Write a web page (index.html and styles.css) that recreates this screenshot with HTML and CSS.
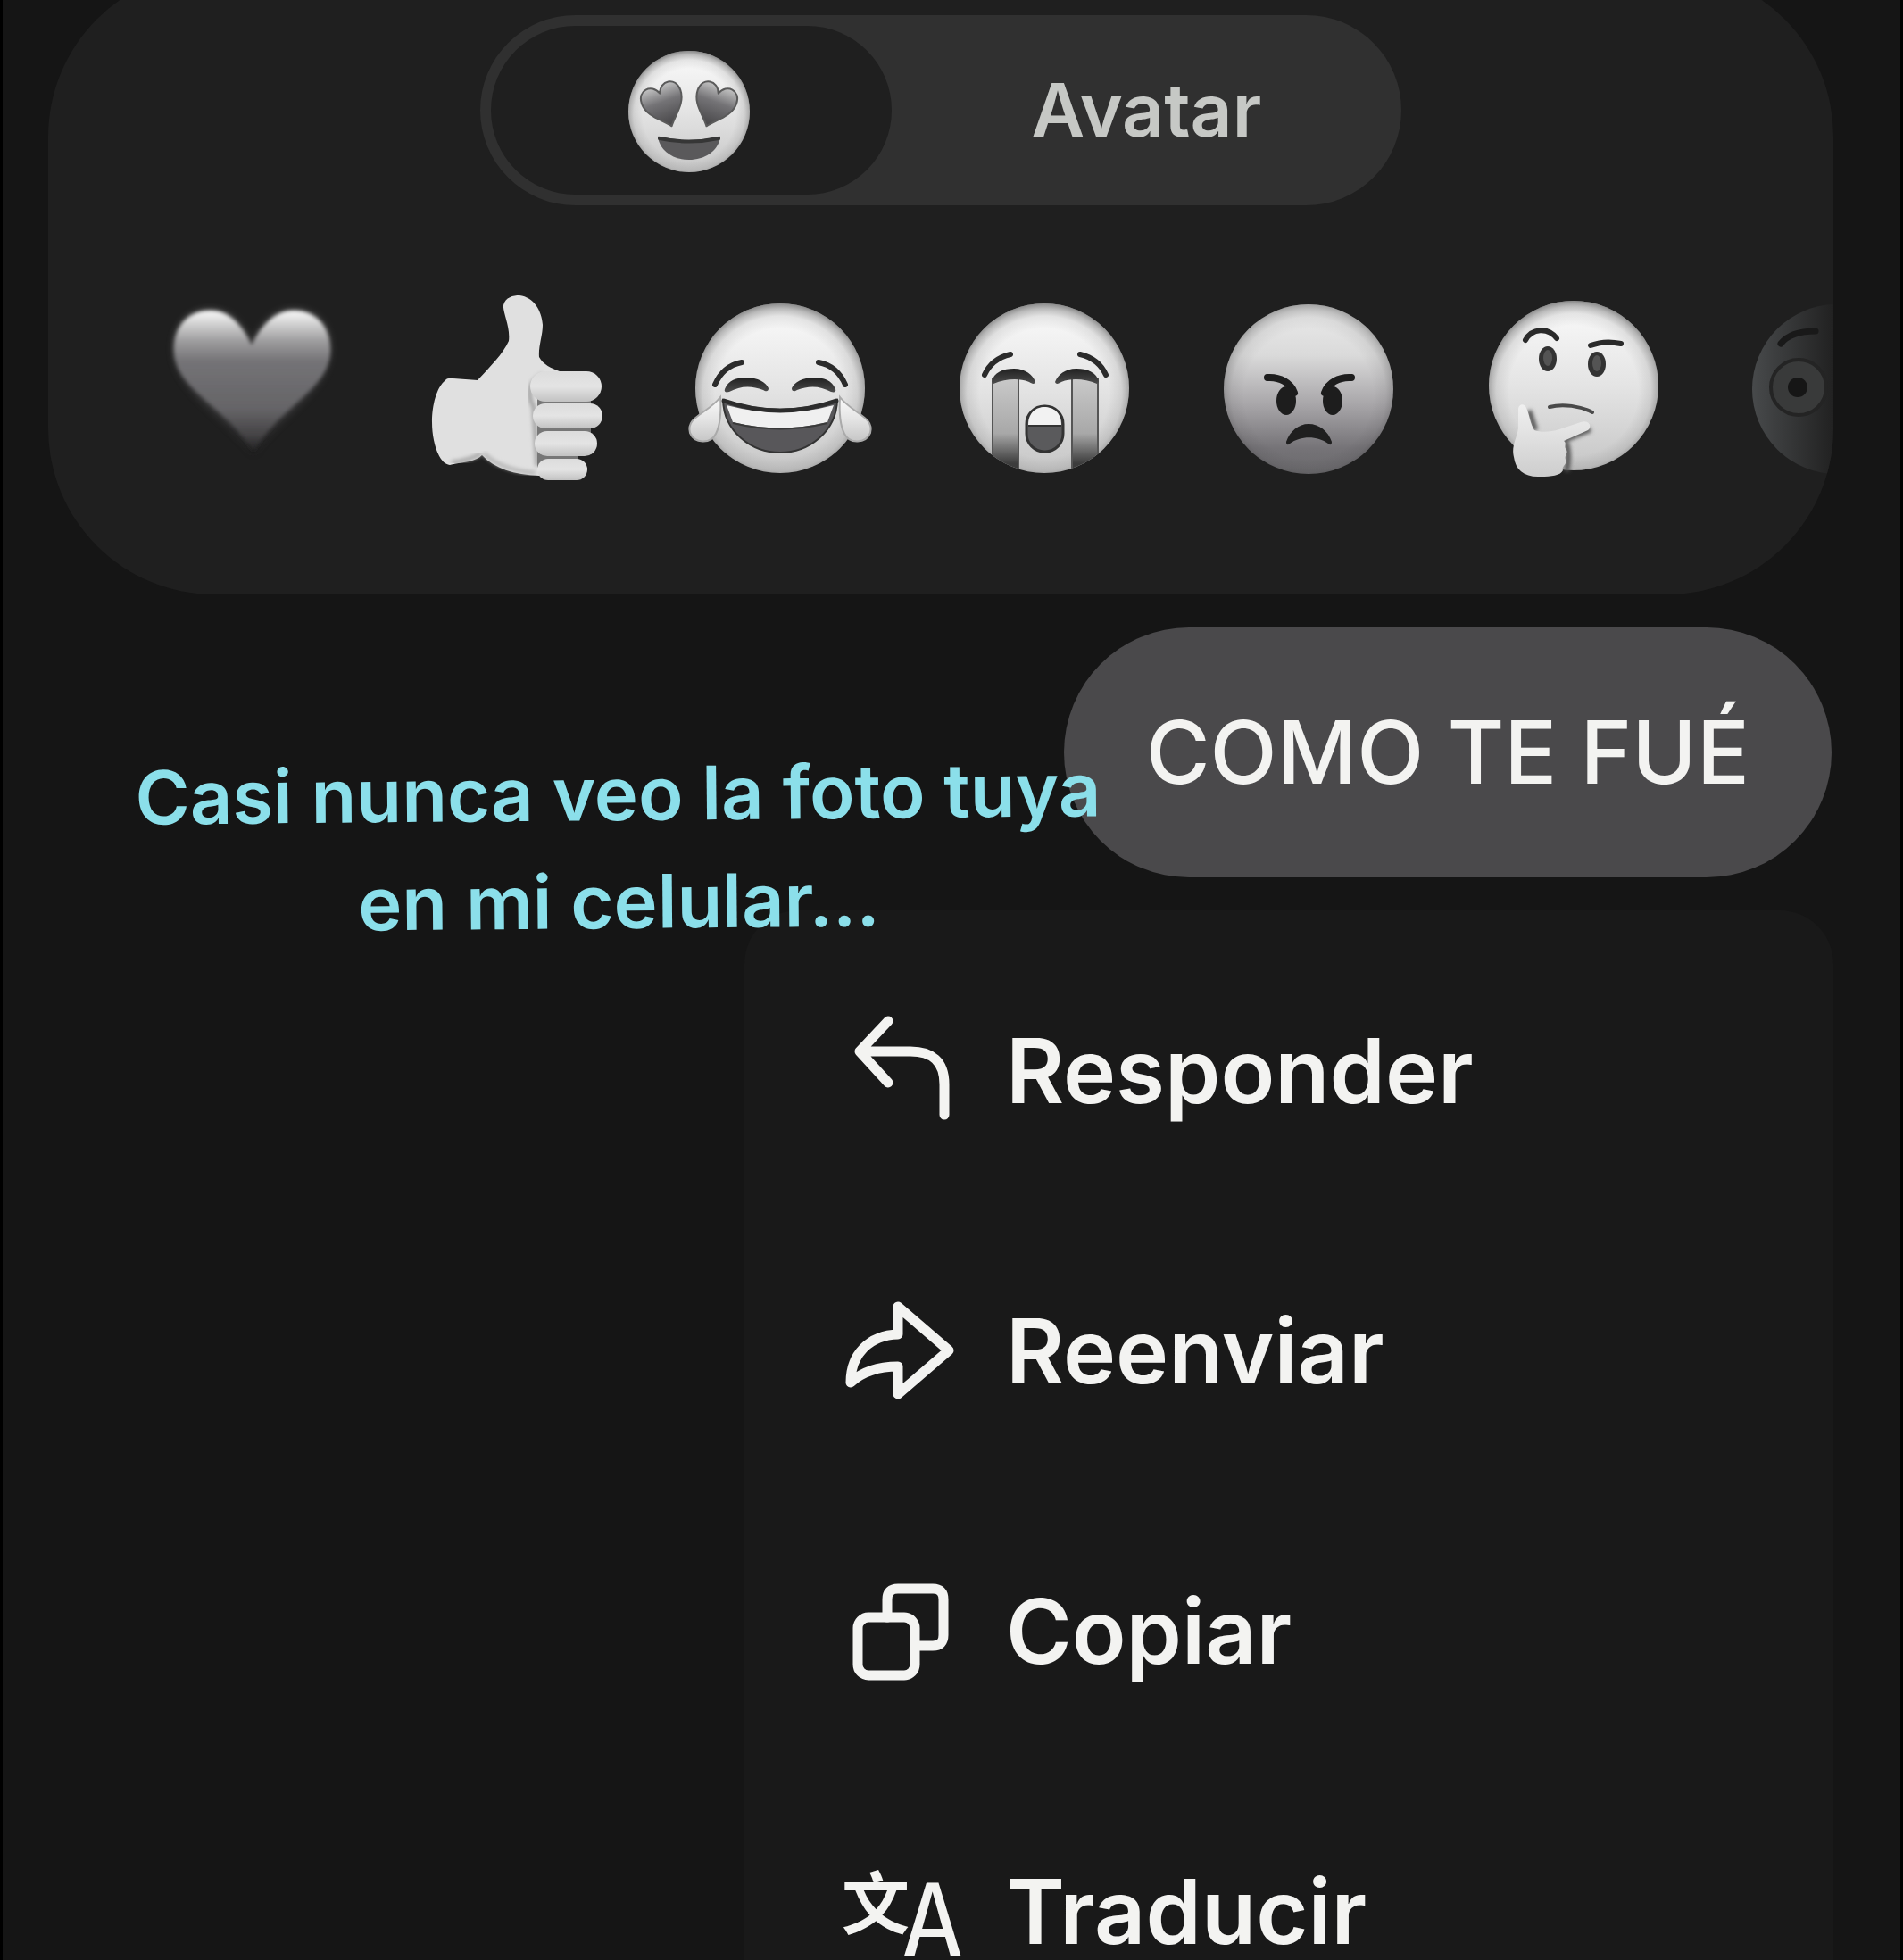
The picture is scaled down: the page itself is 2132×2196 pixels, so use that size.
FILE: index.html
```html
<!DOCTYPE html>
<html lang="es">
  <head>
    <meta charset="utf-8" />
    <meta name="viewport" content="width=device-width, initial-scale=1.0" />
    <title>Mensaje</title>
    <link rel="stylesheet" href="styles.css">
  </head>
  <body>
    <!-- gradients shared by all the emoji -->
    <svg class="defs" width="0" height="0" aria-hidden="true">
      <defs>
        <linearGradient id="face" x1="0" y1="0" x2="0" y2="1">
          <stop offset="0" stop-color="#fbfbfb" />
          <stop offset="0.5" stop-color="#e4e4e4" />
          <stop offset="1" stop-color="#c6c6c6" />
        </linearGradient>
        <linearGradient id="angry" x1="0" y1="0" x2="0" y2="1">
          <stop offset="0" stop-color="#ececec" />
          <stop offset="0.3" stop-color="#dadada" />
          <stop offset="0.6" stop-color="#a6a4a7" />
          <stop offset="0.85" stop-color="#757377" />
          <stop offset="1" stop-color="#6a696c" />
        </linearGradient>
        <radialGradient id="rim" cx="0.5" cy="0.53" r="0.53">
          <stop offset="0.72" stop-color="#000" stop-opacity="0" />
          <stop offset="0.86" stop-color="#000" stop-opacity="0.08" />
          <stop offset="0.94" stop-color="#000" stop-opacity="0.25" />
          <stop offset="1" stop-color="#000" stop-opacity="0.45" />
        </radialGradient>
        <linearGradient id="heart" x1="0" y1="0" x2="0" y2="1">
          <stop offset="0" stop-color="#fafafa" />
          <stop offset="0.1" stop-color="#cfcfcf" />
          <stop offset="0.22" stop-color="#9c9b9d" />
          <stop offset="0.36" stop-color="#747376" />
          <stop offset="0.7" stop-color="#656467" />
          <stop offset="0.88" stop-color="#454446" />
          <stop offset="1" stop-color="#1f1f1f" />
        </linearGradient>
        <linearGradient id="eye-heart" x1="0" y1="0" x2="0" y2="1">
          <stop offset="0" stop-color="#c4c4c4" />
          <stop offset="0.4" stop-color="#747376" />
          <stop offset="1" stop-color="#454446" />
        </linearGradient>
        <linearGradient id="stream" x1="0" y1="0" x2="0" y2="1">
          <stop offset="0" stop-color="#c9c9c9" />
          <stop offset="0.55" stop-color="#a8a8a8" />
          <stop offset="0.85" stop-color="#3c3c3c" />
        </linearGradient>
        <linearGradient id="eyelid" x1="0" y1="0" x2="0" y2="1">
          <stop offset="0" stop-color="#202020" />
          <stop offset="1" stop-color="#4c4c4c" />
        </linearGradient>
        <linearGradient id="faded" x1="0" y1="0" x2="1" y2="0">
          <stop offset="0" stop-color="#55585a" />
          <stop offset="0.48" stop-color="#222" />
        </linearGradient>
        <linearGradient id="hand" x1="0" y1="0" x2="0" y2="1">
          <stop offset="0" stop-color="#f0f0f0" />
          <stop offset="1" stop-color="#cdcdcd" />
        </linearGradient>
        <linearGradient id="finger" x1="0" y1="0" x2="0" y2="1">
          <stop offset="0" stop-color="#dcdcdc" />
          <stop offset="0.5" stop-color="#e4e4e4" />
          <stop offset="1" stop-color="#c2c2c2" />
        </linearGradient>
        <clipPath id="face-clip"><circle cx="120" cy="119" r="95" /></clipPath>
        <filter id="soft"><feGaussianBlur stdDeviation="2" /></filter>
        <filter id="glow"><feGaussianBlur stdDeviation="5" /></filter>
      </defs>
    </svg>

    <main class="screen">
      <section class="reactions">
        <div class="tabs">
          <button type="button" class="tab tab-on" aria-label="Emojis">
            <svg class="tab-emoji" viewBox="0 0 144 144">
              <circle cx="70" cy="73" r="68" fill="url(#face)" />
              <circle cx="70" cy="73" r="68" fill="url(#rim)" />
              <g fill="url(#eye-heart)" stroke="#5a5a5a" stroke-width="2" stroke-linejoin="round">
                <path transform="translate(41 63) rotate(-20)" d="M0 28C-7 18 -23 9 -23 -7C-23 -23 -5 -25 0 -11C5 -25 23 -23 23 -7C23 9 7 18 0 28Z" />
                <path transform="translate(99 63) rotate(20)" d="M0 28C-7 18 -23 9 -23 -7C-23 -23 -5 -25 0 -11C5 -25 23 -23 23 -7C23 9 7 18 0 28Z" />
              </g>
              <path d="M35 102Q34 100 38 101Q70 109 102 101Q106 100 105 102C102 118 87 127 70 127C53 127 38 118 35 102Z" fill="#5a595b" />
              <path d="M37 103Q70 110 103 103" fill="none" stroke="#363636" stroke-width="4" stroke-linecap="round" />
            </svg>
          </button>
          <button type="button" class="tab">Avatar</button>
        </div>

        <div class="emoji-row">
          <button type="button" class="emoji" aria-label="Corazón">
            <svg viewBox="0 0 240 240">
              <path d="M120 71C110 50 96 32 74 32C48 32 33 50 33 76C33 120 90 150 122 192C150 150 208 120 208 76C208 50 192 32 167 32C145 32 130 50 120 71Z" fill="url(#heart)" opacity="0.4" filter="url(#glow)" />
              <path d="M120 71C110 50 96 32 74 32C48 32 33 50 33 76C33 120 90 138 122 190C152 138 208 120 208 76C208 50 192 32 167 32C145 32 130 50 120 71Z" fill="url(#heart)" filter="url(#soft)" />
            </svg>
          </button>
          <button type="button" class="emoji" aria-label="Pulgar arriba">
            <svg viewBox="0 0 240 240">
              <path d="M41 110Q43 107 50 108L77 110C90 96 106 80 112 66C114 50 105 34 106 26C108 17 117 15 124 15C140 17 149 32 150 48C150 60 145 72 146 84C150 92 160 97 169 100L176 130L160 200L146 217C118 216 96 209 82 194C74 202 58 202 46 205C34 204 26 180 26 157C26 138 31 118 41 110Z" fill="#e0e0e0" />
              <path d="M142 214C118 212 98 206 84 192" fill="none" stroke="#b4b4b4" stroke-width="4" filter="url(#soft)" />
              <path d="M48 202C58 201 72 198 81 192" fill="none" stroke="#a2a2a2" stroke-width="4" filter="url(#soft)" />
              <path d="M150 104C134 112 132 126 140 140L144 206" fill="none" stroke="#a4a4a4" stroke-width="5" filter="url(#soft)" />
              <path d="M144 120H204V180H190V208H144Z" fill="#777" />
              <rect x="136" y="100" width="80" height="34" rx="17" fill="url(#finger)" />
              <rect x="139" y="136" width="78" height="28" rx="14" fill="url(#finger)" />
              <rect x="141" y="167" width="70" height="28" rx="14" fill="url(#finger)" />
              <rect x="144" y="198" width="56" height="24" rx="12" fill="url(#finger)" />
            </svg>
          </button>
          <button type="button" class="emoji" aria-label="Llorar de risa">
            <svg viewBox="0 0 240 240">
              <circle cx="120" cy="119" r="95" fill="url(#face)" />
              <circle cx="120" cy="119" r="95" fill="url(#rim)" />
              <g fill="none" stroke="#2b2b2b" stroke-width="6" stroke-linecap="round">
                <path d="M47 115Q56 94 77 90" />
                <path d="M193 115Q184 94 163 90" />
              </g>
              <g fill="url(#eyelid)">
                <path d="M58 120C62 110 71 107 82 107C95 107 104 112 107 119C107 123 104 123 101 121Q81 113 63 123C59 124 57 123 58 120Z" />
                <path d="M182 120C178 110 169 107 158 107C145 107 136 112 133 119C133 123 136 123 139 121Q159 113 177 123C181 124 183 123 182 120Z" />
              </g>
              <path d="M56 132Q120 154 184 132C183 168 152 191 120 191C88 191 57 168 56 132Z" fill="#58575a" stroke="#333" stroke-width="2" />
              <path d="M60 138Q120 154 180 138L173 157Q120 170 67 157Z" fill="#f0f0f0" />
              <path d="M67 158Q120 171 173 158" fill="none" stroke="#3a3a3a" stroke-width="2" />
              <path d="M57 133Q120 155 183 133" fill="none" stroke="#2c2c2c" stroke-width="5" stroke-linecap="round" />
              <g fill="url(#face)" stroke="#aaa" stroke-width="2">
                <path d="M53 129C54 145 53 160 48 170C42 182 24 181 19 169C14 151 38 148 53 129Z" />
                <path d="M187 129C186 145 187 160 192 170C198 182 216 181 221 169C226 151 202 148 187 129Z" />
              </g>
            </svg>
          </button>
          <button type="button" class="emoji" aria-label="Llorar">
            <svg viewBox="0 0 240 240">
              <circle cx="120" cy="119" r="95" fill="url(#face)" />
              <circle cx="120" cy="119" r="95" fill="url(#rim)" />
              <g clip-path="url(#face-clip)" fill="url(#stream)" stroke="#555" stroke-width="2">
                <rect x="62" y="108" width="29" height="112" />
                <rect x="151" y="108" width="29" height="112" />
              </g>
              <g fill="none" stroke="#2b2b2b" stroke-width="6" stroke-linecap="round">
                <path d="M53 104Q61 86 82 81" />
                <path d="M189 104Q181 86 160 81" />
              </g>
              <g fill="url(#eyelid)">
                <path d="M61 112C63 101 74 97 86 97C99 97 107 104 110 112C109 115 106 114 103 112C90 107 76 109 63 114Z" />
                <path d="M181 112C179 101 168 97 156 97C143 97 135 104 132 112C133 115 136 114 139 112C152 107 166 109 179 114Z" />
              </g>
              <rect x="100" y="139" width="41" height="51" rx="20" fill="#5a5a5c" stroke="#333" stroke-width="3" />
              <path d="M102 160C102 146 111 140 120 140C130 140 139 146 139 160Z" fill="#f2f2f2" />
              <path d="M102 161H139" stroke="#333" stroke-width="2" />
            </svg>
          </button>
          <button type="button" class="emoji" aria-label="Enojado">
            <svg viewBox="0 0 240 240">
              <circle cx="120" cy="120" r="95" fill="url(#angry)" />
              <circle cx="120" cy="120" r="95" fill="url(#rim)" opacity="0.7" />
              <g fill="none" stroke="#1d1d1d" stroke-width="8" stroke-linecap="round">
                <path d="M74 107C88 106 100 113 104 124" />
                <path d="M168 107C154 106 142 113 138 124" />
              </g>
              <ellipse cx="95" cy="133" rx="11" ry="16" fill="#1d1d1d" />
              <ellipse cx="147" cy="133" rx="11" ry="16" fill="#1d1d1d" />
              <path d="M95 179C99 167 109 159 120 159C132 159 142 167 146 179C146 183 144 183 142 181C130 172 111 172 99 181C97 183 95 183 95 179Z" fill="#1f1f1f" />
            </svg>
          </button>
          <button type="button" class="emoji" aria-label="Pensativo">
            <svg viewBox="0 0 240 240">
              <circle cx="121" cy="116" r="95" fill="url(#face)" />
              <circle cx="121" cy="116" r="95" fill="url(#rim)" />
              <g fill="none" stroke="#2a2a2a" stroke-width="6" stroke-linecap="round">
                <path d="M67 65C74 52 92 50 102 63" />
                <path d="M140 71Q156 65 174 69" />
                <path d="M94 140C109 136 129 139 142 146" stroke="#4a4a4a" stroke-width="4" />
              </g>
              <ellipse cx="92" cy="86" rx="10" ry="14" fill="#333" />
              <ellipse cx="92" cy="85" rx="5" ry="9" fill="#545454" />
              <ellipse cx="147" cy="92" rx="10" ry="14" fill="#333" />
              <ellipse cx="147" cy="91" rx="5" ry="9" fill="#545454" />
              <path d="M71 144L78 166M108 178L140 165M113 180Q117 196 113 212" stroke="#555" stroke-width="6" fill="none" filter="url(#soft)" />
              <path d="M59 142C60 136 66 136 68 141C72 150 72 158 77 166C84 169 96 168 105 165L129 157C137 154 143 161 137 166L110 178C114 181 109 184 113 188C115 193 110 194 112 199C114 205 107 206 109 211C106 217 96 218 84 218C66 219 56 211 54 196C51 184 57 176 59 164Z" fill="url(#hand)" />
            </svg>
          </button>
          <button type="button" class="emoji" aria-label="Sorprendido">
            <svg viewBox="0 0 240 240">
              <circle cx="120" cy="120" r="95" fill="url(#faded)" opacity="0.75" />
              <circle cx="77" cy="118" r="31" fill="#393a3a" stroke="#242424" stroke-width="4" />
              <circle cx="76" cy="118" r="11" fill="#161616" />
              <path d="M57 69Q68 55 96 55" fill="none" stroke="#191919" stroke-width="7" stroke-linecap="round" />
            </svg>
          </button>
        </div>
      </section>

      <section class="message">
        <p class="bubble">COMO TE FUÉ</p>
        <p class="caption">Casi nunca veo la foto tuya<br />en mi celular...</p>
      </section>

      <nav class="menu">
        <button type="button" class="menu-item">
          <svg class="icon" viewBox="0 0 128 128">
            <path d="M49 9L17 43L49 78M17 43H74C98 43 112 54 112 80V114" />
          </svg>
          Responder
        </button>
        <button type="button" class="menu-item">
          <svg class="icon" viewBox="0 0 128 128">
            <path d="M60 15L117 64L60 113V82C39 82 21 87 7 100C7 68 28 47 60 46Z" />
          </svg>
          Reenviar
        </button>
        <button type="button" class="menu-item">
          <svg class="icon" viewBox="0 0 128 128">
            <rect x="15" y="49" width="64" height="65" rx="12" />
            <path d="M48 49V29Q48 17 60 17H99Q111 17 111 29V69Q111 81 99 81H79" />
          </svg>
          Copiar
        </button>
        <button type="button" class="menu-item">
          <svg class="icon icon-text" viewBox="0 0 128 128">
            <text x="-3" y="84" class="icon-han">文</text>
            <text x="65" y="114" class="icon-latin">A</text>
          </svg>
          Traducir
        </button>
      </nav>
    </main>
  </body>
</html>
```
FILE: styles.css
```css
* {
  box-sizing: border-box;
}
body {
  margin: 0;
  height: 100vh;
  overflow: hidden;
  background-color: #151515;
  font-family: Inter, "Liberation Sans", sans-serif;
  color: #f3f3f1;
}
button {
  margin: 0;
  padding: 0;
  border: 0;
  background: none;
  color: inherit;
  font: inherit;
  cursor: pointer;
}
svg {
  display: block;
}
.defs {
  position: absolute;
}
.screen {
  display: flex;
  flex-direction: column;
  gap: 37px;
  height: 100%;
  overflow: hidden;
  padding: 0 75px 0 51px;
  border: solid #000;
  border-width: 0 3px;
}

/* reactions */
.reactions {
  flex: none;
  margin-top: -33px;
  padding: 50px 0 110px;
  border-radius: 186px;
  background-color: #1f1f1f;
  overflow: hidden;
}
.tabs {
  display: flex;
  width: 51.6%;
  margin: 0 auto 86px;
  padding: 12px 0 12px 12px;
  border-radius: 107px;
  background-color: #303030;
}
.tab {
  flex: 1;
  height: 189px;
  border-radius: 95px;
  color: #c6c8c5;
  font-size: 82px;
  font-weight: 600;
}
.tab-on {
  flex: 0 0 44%;
  background-color: #1f1f1f;
}
.tab-emoji {
  width: 144px;
  height: 144px;
  margin: 0 auto;
}
.emoji-row {
  display: flex;
  padding-left: 80px;
}
.emoji {
  flex: 0 0 296px;
}
.emoji svg {
  width: 240px;
  height: 240px;
  margin: 0 auto;
}

/* message */
.message {
  position: relative;
  flex: none;
  display: flex;
  justify-content: flex-end;
}
.bubble {
  margin: 0 2px 0 0;
  padding: 0 92px;
  border-radius: 140px;
  background-color: #4a494b;
  font-size: 98px;
  font-weight: 450;
  line-height: 280px;
}
/* the caption lies over the bubble */
.caption {
  position: absolute;
  top: 126px;
  left: 98px;
  margin: 0;
  color: #8bdfea;
  font-size: 83px;
  font-weight: 600;
  line-height: 121px;
  text-align: center;
  white-space: nowrap;
  transform: rotate(-0.5deg);
}

/* menu */
.menu {
  flex: none;
  align-self: flex-end;
  display: flex;
  flex-direction: column;
  width: 61%;
  padding: 22px 0 22px 112px;
  border-radius: 60px;
  background-color: #191919;
}
.menu-item {
  display: flex;
  align-items: center;
  gap: 53px;
  height: 314px;
  font-size: 100px;
  font-weight: 600;
  text-align: left;
}
.icon {
  flex: none;
  width: 128px;
  height: 128px;
  overflow: visible;
  fill: none;
  stroke: #f3f3f1;
  stroke-width: 11px;
  stroke-linecap: round;
  stroke-linejoin: round;
}
.icon-text {
  fill: #f3f3f1;
  stroke: none;
}
.icon-han {
  font-family: "Noto Sans CJK SC", sans-serif;
  font-size: 76px;
  font-weight: 700;
}
.icon-latin {
  font-family: "DejaVu Sans Mono", monospace;
  font-size: 112px;
  font-weight: 400;
}
```
